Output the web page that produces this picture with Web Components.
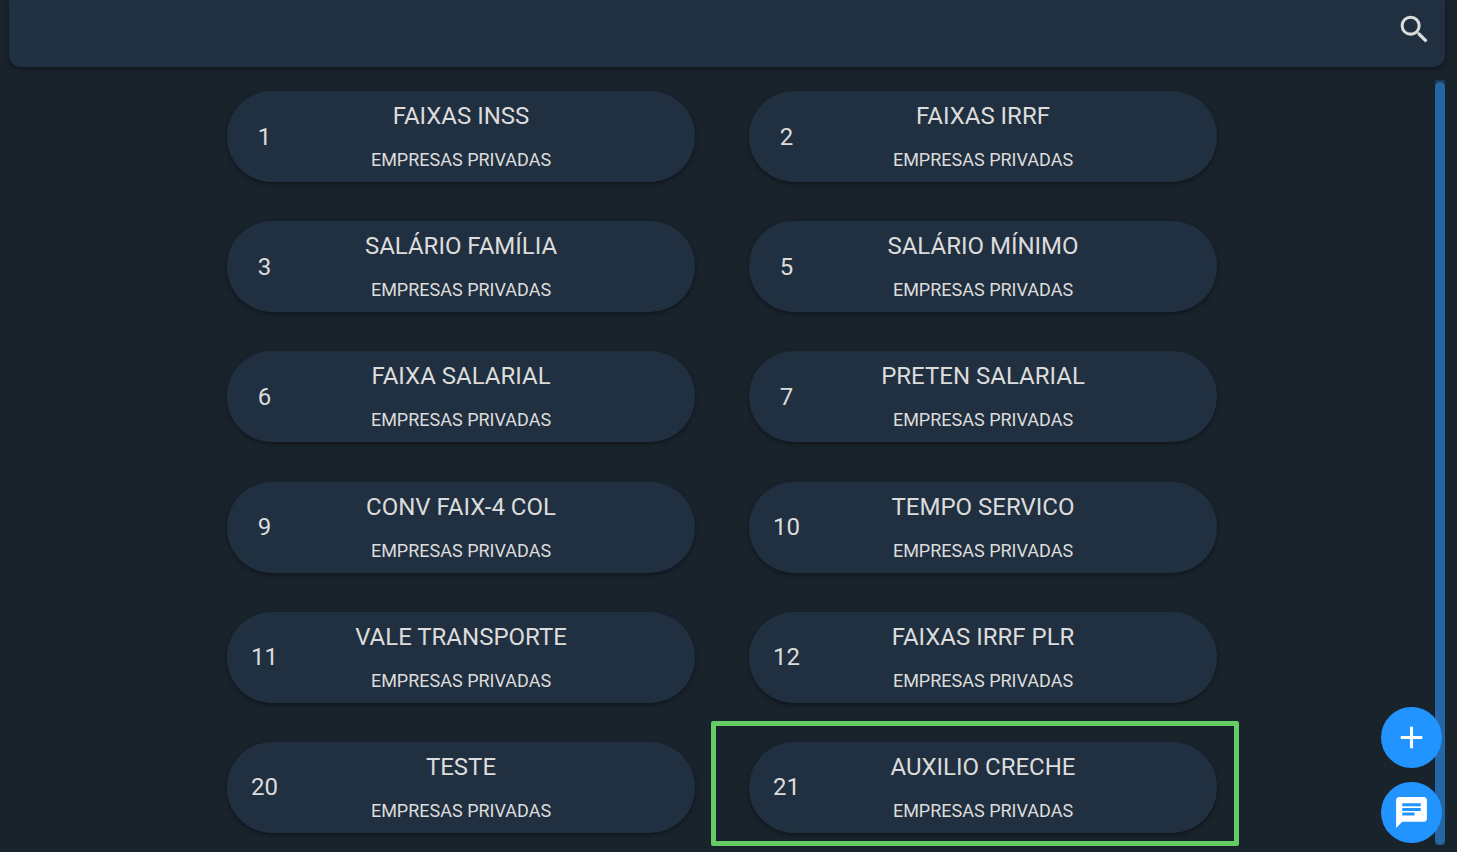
<!DOCTYPE html>
<html lang="pt-BR">
<head>
<meta charset="utf-8">
<meta name="viewport" content="width=device-width, initial-scale=1">
<title>Tabelas</title>
<style>
    html, body {
        height: 100%;
        margin: 0;
    }

    body {
        background-color: #19232c;
        color: #dcdcdc;
        font-family: Roboto, sans-serif;
        overflow: hidden;
    }
</style>
</head>
<body>
<tables-page></tables-page>

<script>
const TABLES = [
    { code: 1, name: 'FAIXAS INSS' },
    { code: 2, name: 'FAIXAS IRRF' },
    { code: 3, name: 'SALÁRIO FAMÍLIA' },
    { code: 5, name: 'SALÁRIO MÍNIMO' },
    { code: 6, name: 'FAIXA SALARIAL' },
    { code: 7, name: 'PRETEN SALARIAL' },
    { code: 9, name: 'CONV FAIX-4 COL' },
    { code: 10, name: 'TEMPO SERVICO' },
    { code: 11, name: 'VALE TRANSPORTE' },
    { code: 12, name: 'FAIXAS IRRF PLR' },
    { code: 20, name: 'TESTE' },
    { code: 21, name: 'AUXILIO CRECHE', marked: true },
];

const ICONS = {
    search: 'M15.5 14h-.79l-.28-.27A6.47 6.47 0 0 0 16 9.5 6.5 6.5 0 1 0 9.5 16c1.61 0 3.09-.59 4.23-1.57l.27.28v.79l5 4.99L20.49 19l-4.99-5zm-6 0C7.01 14 5 11.99 5 9.5S7.01 5 9.5 5 14 7.01 14 9.5 11.99 14 9.5 14z',
    add: 'M19 13h-6v6h-2v-6H5v-2h6V5h2v6h6v2z',
    chat: 'M20 2H4c-1.1 0-1.99.9-1.99 2L2 22l4-4h14c1.1 0 2-.9 2-2V4c0-1.1-.9-2-2-2zM6 9h12v2H6V9zm8 5H6v-2h8v2zm4-6H6V6h12v2z',
};

class AppIcon extends HTMLElement {

    constructor() {
        super();
        this.attachShadow({ mode: 'open' });
    }

    connectedCallback() {
        this.shadowRoot.innerHTML = /* html */`
        <style>
            :host {
                display: block;
                width: 37px;
                height: 37px;
            }
            svg {
                display: block;
                width: 100%;
                height: 100%;
                fill: currentColor;
            }
        </style>
        <svg viewBox="0 0 24 24" aria-hidden="true"><path d="${ICONS[this.getAttribute('name')]}"/></svg>
        `;
    }

}

customElements.define('app-icon', AppIcon);

class SearchBar extends HTMLElement {

    constructor() {
        super();
        this.attachShadow({ mode: 'open' });
    }

    static get styles() {
        return `
            :host {
                display: flex;
                justify-content: flex-end;
                align-items: flex-start;
                box-sizing: border-box;
                height: 67px;
                padding: 11px 12px;
                border-radius: 0 0 12px 12px;
                background-color: #213040;
                box-shadow: 0 2px 5px rgba(0, 0, 0, .4);
            }
            button {
                padding: 0;
                border: 0;
                background: none;
                color: inherit;
                cursor: pointer;
            }
        `
    }

    connectedCallback() {
        this.shadowRoot.innerHTML = /* html */`
        <style>${SearchBar.styles}</style>
        <button type="button" aria-label="Pesquisar"><app-icon name="search"></app-icon></button>
        `;
    }

}

customElements.define('search-bar', SearchBar);

class TableCard extends HTMLElement {

    constructor() {
        super();
        this.attachShadow({ mode: 'open' });
    }

    static get styles() {
        return `
            :host {
                display: block;
                position: relative;
            }
            a {
                display: grid;
                grid-template-columns: 75px 1fr 75px;
                align-items: center;
                box-sizing: border-box;
                min-height: 91px;
                border-radius: 45px;
                background-color: #213040;
                box-shadow: 0 2px 4px rgba(0, 0, 0, .4);
                color: inherit;
                text-align: center;
                text-decoration: none;
            }
            .code, .name {
                font-size: 24px;
                line-height: 28px;
            }
            .text {
                display: grid;
                gap: 19px;
            }
            .company {
                font-size: 18px;
                line-height: 22px;
            }
            :host([marked])::after {
                content: '';
                position: absolute;
                inset: -21px -22px -13px -38px;
                border: 5px solid #66cc66;
                border-radius: 2px;
                pointer-events: none;
            }
        `
    }

    connectedCallback() {
        this.shadowRoot.innerHTML = /* html */`
        <style>${TableCard.styles}</style>
        <a href="#">
            <span class="code"><slot name="code"></slot></span>
            <span class="text">
                <span class="name"><slot></slot></span>
                <span class="company"><slot name="company"></slot></span>
            </span>
        </a>
        `;
    }

}

customElements.define('table-card', TableCard);

class FabButton extends HTMLElement {

    constructor() {
        super();
        this.attachShadow({ mode: 'open' });
    }

    static get styles() {
        return `
            :host {
                display: block;
            }
            button {
                display: grid;
                place-items: center;
                width: 61px;
                height: 61px;
                padding: 0;
                border: 0;
                border-radius: 50%;
                background-color: #2194ff;
                color: white;
                cursor: pointer;
            }
        `
    }

    connectedCallback() {
        this.shadowRoot.innerHTML = /* html */`
        <style>${FabButton.styles}</style>
        <button type="button" aria-label="${this.getAttribute('label')}">
            <app-icon name="${this.getAttribute('icon')}"></app-icon>
        </button>
        `;
    }

}

customElements.define('fab-button', FabButton);

class TablesPage extends HTMLElement {

    constructor() {
        super();
        this.attachShadow({ mode: 'open' });
    }

    static get styles() {
        return `
            :host {
                display: flex;
                flex-direction: column;
                gap: 13px;
                box-sizing: border-box;
                height: 100%;
                padding: 0 12px 7px 9px;
            }
            main {
                display: flex;
                flex: 1;
                min-height: 0;
            }
            .list {
                display: grid;
                flex: 1;
                grid-template-columns: repeat(2, minmax(0, 468px));
                justify-content: center;
                align-content: space-between;
                column-gap: 54px;
                padding: 11px 0 12px;
            }
            .track {
                display: flex;
                box-sizing: border-box;
                width: 10px;
                padding-top: 2px;
                background-color: #203a55;
            }
            .thumb {
                flex: 1;
                border-radius: 5px;
                background-color: #2566a7;
            }
            .actions {
                position: fixed;
                right: 15px;
                bottom: 9px;
                display: grid;
                gap: 14px;
            }
        `
    }

    /**
     * @param {{code: number, name: string, marked?: boolean}} table
     * @returns {string}
     */
    cardTemplate(table) {
        return /* html */`
        <table-card ${table.marked ? 'marked' : ''}>
            <span slot="code">${table.code}</span>
            ${table.name}
            <span slot="company">EMPRESAS PRIVADAS</span>
        </table-card>
        `;
    }

    connectedCallback() {
        this.render();
    }

    render() {
        this.shadowRoot.innerHTML = /* html */`
        <style>${TablesPage.styles}</style>
        <search-bar></search-bar>
        <main>
            <div class="list">${TABLES.map(this.cardTemplate).join('')}</div>
            <div class="track"><div class="thumb"></div></div>
        </main>
        <div class="actions">
            <fab-button icon="add" label="Adicionar"></fab-button>
            <fab-button icon="chat" label="Mensagens"></fab-button>
        </div>
        `;
    }

}

customElements.define('tables-page', TablesPage);
</script>
</body>
</html>
